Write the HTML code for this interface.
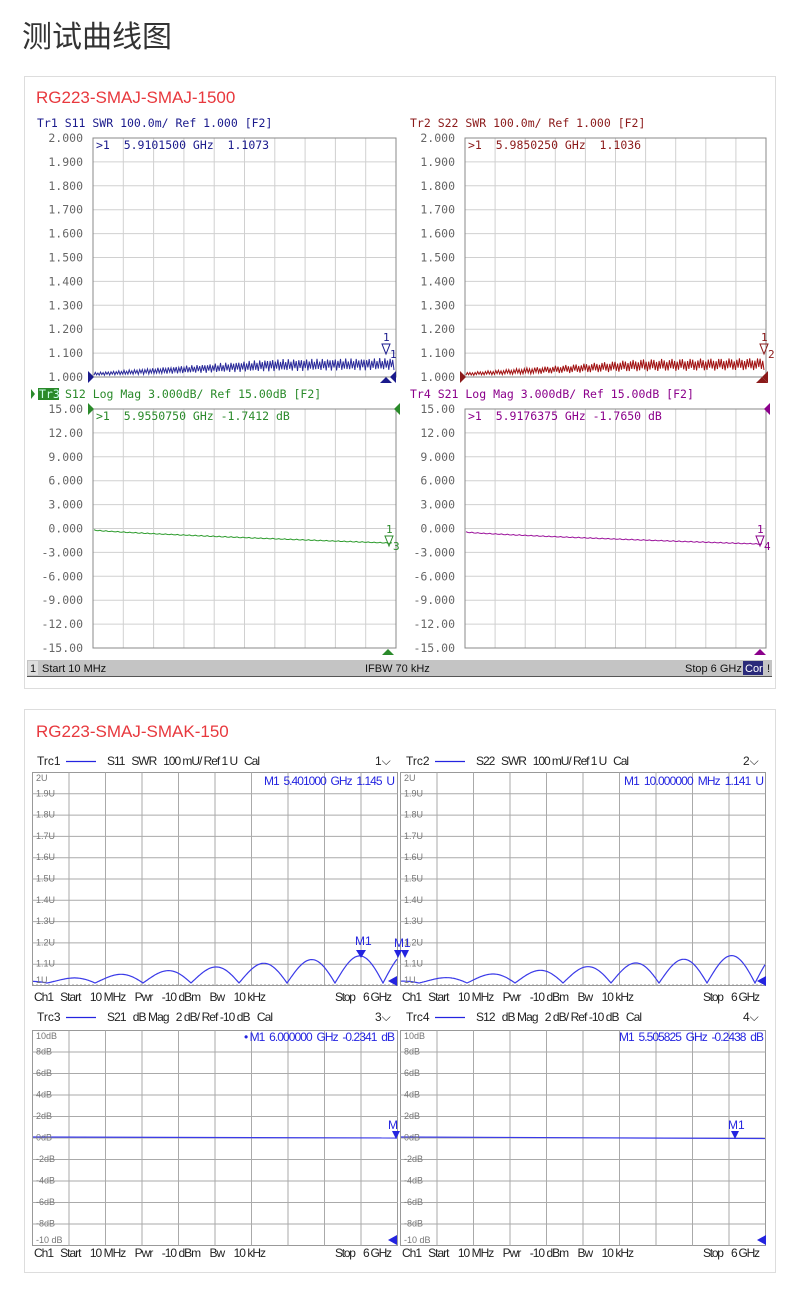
<!DOCTYPE html>
<html><head><meta charset="utf-8"><style>
html,body{margin:0;padding:0;background:#fff;width:800px;height:1290px;overflow:hidden}
svg{display:block}
text{white-space:pre}
.m{font-family:"DejaVu Sans Mono","Liberation Mono",monospace;font-size:11.5px}
.s{font-family:"Liberation Sans","DejaVu Sans",sans-serif;font-size:12px;fill:#222}
.yl{font-family:"DejaVu Sans Mono","Liberation Mono",monospace;font-size:11.5px;fill:#666;text-anchor:end}
.yl2{font-family:"Liberation Sans",sans-serif;font-size:9px;fill:#777}
</style></head><body>
<svg id="S" width="800" height="1290" xmlns="http://www.w3.org/2000/svg" xml:space="preserve">
<text x="22" y="47" font-family="'Liberation Sans','Noto Sans CJK SC',sans-serif" font-size="30" fill="#333">测试曲线图</text>
<rect x="24.5" y="76.5" width="751" height="612" fill="#fff" stroke="#ddd"/>
<rect x="24.5" y="709.5" width="751" height="563" fill="#fff" stroke="#ddd"/>
<text x="36" y="103" font-family="'Liberation Sans',sans-serif" font-size="17" fill="#e8383d">RG223-SMAJ-SMAJ-1500</text>
<text x="36" y="737" font-family="'Liberation Sans',sans-serif" font-size="17" fill="#e8383d">RG223-SMAJ-SMAK-150</text>
<g id="G"></g>
<text class="m" x="37" y="127" fill="#1a1a8c">Tr1 S11 SWR 100.0m/ Ref 1.000 [F2]</text>
<text class="m" x="410" y="127" fill="#8b1a1a">Tr2 S22 SWR 100.0m/ Ref 1.000 [F2]</text>
<rect x="38" y="388" width="21" height="12" fill="#2a8a2a"/>
<text class="m" x="39" y="398" fill="#cfe">Tr3</text>
<polygon points="31,389 35,394 31,399" fill="#2a8a2a"/>
<text class="m" x="65" y="398" fill="#2a8a2a">S12 Log Mag 3.000dB/ Ref 15.00dB [F2]</text>
<text class="m" x="410" y="398" fill="#8b008b">Tr4 S21 Log Mag 3.000dB/ Ref 15.00dB [F2]</text>
<text class="m" x="96" y="149" fill="#1a1a8c">&gt;1  5.9101500 GHz  1.1073</text>
<text class="m" x="468" y="149" fill="#8b1a1a">&gt;1  5.9850250 GHz  1.1036</text>
<text class="m" x="96" y="420" fill="#2a8a2a">&gt;1  5.9550750 GHz -1.7412 dB</text>
<text class="m" x="468" y="420" fill="#8b008b">&gt;1  5.9176375 GHz -1.7650 dB</text>
<g id="YL"></g>
<rect x="27" y="660" width="745" height="16" fill="#c4c4c4"/>
<line x1="27" y1="676.5" x2="772" y2="676.5" stroke="#555"/>
<rect x="28" y="661" width="10" height="14" fill="#ddd"/>
<text x="30" y="672" font-family="'Liberation Sans Narrow','Liberation Sans',sans-serif" font-size="11" fill="#111">1</text>
<text x="42" y="672" font-family="'Liberation Sans Narrow','Liberation Sans',sans-serif" font-size="11" fill="#111">Start 10 MHz</text>
<text x="365" y="672" font-family="'Liberation Sans Narrow','Liberation Sans',sans-serif" font-size="11" fill="#111">IFBW 70 kHz</text>
<text x="685" y="672" font-family="'Liberation Sans Narrow','Liberation Sans',sans-serif" font-size="11" fill="#111">Stop 6 GHz</text>
<rect x="743" y="661" width="20" height="14" fill="#2a2a7a"/>
<text x="745" y="672" font-family="'Liberation Sans Narrow','Liberation Sans',sans-serif" font-size="11" fill="#fff">Cor</text>
<text x="767" y="672" font-family="'Liberation Sans',sans-serif" font-size="11" fill="#111">!</text>
<g class="s">
<text x="37" y="765">Trc1</text><line x1="66" y1="761.5" x2="96" y2="761.5" stroke="#2424e0" stroke-width="1.3"/>
<text x="107" y="765" textLength="153" lengthAdjust="spacing">S11   SWR   100 mU/ Ref 1 U   Cal</text><text x="375" y="765">1⌵</text>
<text x="406" y="765">Trc2</text><line x1="435" y1="761.5" x2="465" y2="761.5" stroke="#2424e0" stroke-width="1.3"/>
<text x="476" y="765" textLength="153" lengthAdjust="spacing">S22   SWR   100 mU/ Ref 1 U   Cal</text><text x="743" y="765">2⌵</text>
<text x="37" y="1021">Trc3</text><line x1="66" y1="1017.5" x2="96" y2="1017.5" stroke="#2424e0" stroke-width="1.3"/>
<text x="107" y="1021" textLength="166" lengthAdjust="spacing">S21   dB Mag   2 dB/ Ref -10 dB   Cal</text><text x="375" y="1021">3⌵</text>
<text x="406" y="1021">Trc4</text><line x1="435" y1="1017.5" x2="465" y2="1017.5" stroke="#2424e0" stroke-width="1.3"/>
<text x="476" y="1021" textLength="166" lengthAdjust="spacing">S12   dB Mag   2 dB/ Ref -10 dB   Cal</text><text x="743" y="1021">4⌵</text>
<text x="34" y="1001" textLength="232" lengthAdjust="spacing">Ch1   Start    10 MHz    Pwr    -10 dBm    Bw    10 kHz</text><text x="335" y="1001" textLength="57" lengthAdjust="spacing">Stop    6 GHz</text>
<text x="402" y="1001" textLength="232" lengthAdjust="spacing">Ch1   Start    10 MHz    Pwr    -10 dBm    Bw    10 kHz</text><text x="703" y="1001" textLength="57" lengthAdjust="spacing">Stop    6 GHz</text>
<text x="34" y="1257" textLength="232" lengthAdjust="spacing">Ch1   Start    10 MHz    Pwr    -10 dBm    Bw    10 kHz</text><text x="335" y="1257" textLength="57" lengthAdjust="spacing">Stop    6 GHz</text>
<text x="402" y="1257" textLength="232" lengthAdjust="spacing">Ch1   Start    10 MHz    Pwr    -10 dBm    Bw    10 kHz</text><text x="703" y="1257" textLength="57" lengthAdjust="spacing">Stop    6 GHz</text>
</g>
<g font-family="'Liberation Sans',sans-serif" font-size="12" fill="#2424e0">
<text x="264" y="785" textLength="131" lengthAdjust="spacing">M1  5.401000  GHz  1.145  U</text>
<text x="624" y="785" textLength="140" lengthAdjust="spacing">M1  10.000000  MHz  1.141  U</text>
<text x="244" y="1041" textLength="151" lengthAdjust="spacing">• M1  6.000000  GHz  -0.2341  dB</text>
<text x="619" y="1041" textLength="145" lengthAdjust="spacing">M1  5.505825  GHz  -0.2438  dB</text>
<text x="355" y="945">M1</text><text x="394" y="947">M1</text>
<text x="388" y="1129">M</text><text x="728" y="1129">M1</text>
</g>
<g id="Y2"></g>
</svg>
<script>
var NS="http://www.w3.org/2000/svg",G=document.getElementById('G');
function el(t,a,p){var e=document.createElementNS(NS,t);for(var k in a)e.setAttribute(k,a[k]);(p||G).appendChild(e);return e;}
function grid1(x0,y0,w,h,col){for(var i=1;i<10;i++){el('line',{x1:x0+w*i/10,y1:y0,x2:x0+w*i/10,y2:y0+h,stroke:'#d0d0d0'});el('line',{x1:x0,y1:y0+h*i/10,x2:x0+w,y2:y0+h*i/10,stroke:'#d0d0d0'});}
el('rect',{x:x0,y:y0,width:w,height:h,fill:'none',stroke:'#888'});}
grid1(93,138,303,239);grid1(465,138,301,239);grid1(93,409,303,239);grid1(465,409,301,239);
var YL=document.getElementById('YL');
var a=['2.000','1.900','1.800','1.700','1.600','1.500','1.400','1.300','1.200','1.100','1.000'],b=['15.00','12.00','9.000','6.000','3.000','0.000','-3.000','-6.000','-9.000','-12.00','-15.00'];
for(var i=0;i<11;i++){[[83,138,a,'#1a1a8c'],[455,138,a,'#8b1a1a'],[83,409,b,'#2a8a2a'],[455,409,b,'#666']].forEach(function(q){var t=el('text',{x:q[0],y:q[1]+i*23.9+4,'class':'yl',fill:(i==10&&q[1]==138)||(i==0&&q[0]==83&&q[1]==409)?q[3]:'#666'},YL);t.textContent=q[2][i];});}
function swr(x0,w,col,seed){var d='',n=230;for(var i=0;i<=n;i++){var f=i/n;var g=Math.min(1,f*1.7);var base=374-g*7-f*3;var amp=3+g*9;var y=base+(i%2?-amp/2:amp/2)*(0.75+0.25*Math.sin(i*seed));d+=(i?'L':'M')+(x0+f*w).toFixed(1)+' '+y.toFixed(1);}el('path',{d:d,fill:'none',stroke:col,'stroke-width':1});}
swr(94,300,'#2a2a9a',1.7);swr(466,298,'#a01010',2.3);
function flat(x0,w,y1,y2,col){var d='';for(var i=0;i<=150;i++){var f=i/150;d+=(i?'L':'M')+(x0+f*w).toFixed(1)+' '+(y1+(y2-y1)*Math.pow(f,0.8)+(i%3?0.3:-0.3)).toFixed(1);}el('path',{d:d,fill:'none',stroke:col,'stroke-width':1});}
flat(94,298,530,543,'#2a9a2a');flat(466,296,532,544,'#9a109a');
function tri(p,c){el('polygon',{points:p,fill:c});}
tri('88,371 94,377 88,383','#1a1a8c');tri('396,371 390,377 396,383','#1a1a8c');tri('380,383 386,377 392,383','#1a1a8c');
tri('460,371 466,377 460,383','#8b1a1a');tri('768,371 762,377 768,383','#8b1a1a');tri('756,383 762,377 768,383','#8b1a1a');
tri('88,403 94,409 88,415','#2a8a2a');tri('400,403 394,409 400,415','#2a8a2a');tri('382,655 388,649 394,655','#2a8a2a');
tri('770,403 764,409 770,415','#8b008b');tri('754,655 760,649 766,655','#8b008b');
[[386,'#1a1a8c',348,'1'],[764,'#8b1a1a',348,'2'],[389,'#2a8a2a',540,'3'],[760,'#8b008b',540,'4']].forEach(function(q){el('polygon',{points:(q[0]-4)+','+(q[2]-4)+' '+(q[0]+4)+','+(q[2]-4)+' '+q[0]+','+(q[2]+6),fill:'none',stroke:q[1]});var t=el('text',{x:q[0]-3,y:q[2]-7,fill:q[1],'font-family':'DejaVu Sans Mono','font-size':'11'});t.textContent='1';var u=el('text',{x:q[0]+4,y:q[2]+10,fill:q[1],'font-family':'DejaVu Sans Mono','font-size':'11'});u.textContent=q[3];});
function grid2(x0,y0,w,h){el('rect',{x:x0,y:y0,width:w,height:h,fill:'#fff',stroke:'#999'});for(var i=1;i<10;i++){el('line',{x1:x0+w*i/10,y1:y0,x2:x0+w*i/10,y2:y0+h,stroke:'#aaa'});el('line',{x1:x0,y1:y0+h*i/10,x2:x0+w,y2:y0+h*i/10,stroke:'#aaa'});}}
grid2(32.5,772.5,365,213);grid2(400.5,772.5,365,213);grid2(32.5,1030.5,365,215);grid2(400.5,1030.5,365,215);
el('line',{x1:32,y1:985,x2:398,y2:985,stroke:'#999','stroke-dasharray':'2,2'});el('line',{x1:400,y1:985,x2:766,y2:985,stroke:'#999','stroke-dasharray':'2,2'});
var Y2=document.getElementById('Y2');
var l1=['2U','1.9U','1.8U','1.7U','1.6U','1.5U','1.4U','1.3U','1.2U','1.1U','1U'],l2=['10dB','8dB','6dB','4dB','2dB','0dB','-2dB','-4dB','-6dB','-8dB','-10 dB'];
for(var i=0;i<11;i++){[[36,772,21.3,l1],[404,772,21.3,l1],[36,1030,21.5,l2],[404,1030,21.5,l2]].forEach(function(q){var y=q[1]+i*q[2];var t=el('text',{x:q[0],y:(i==0?y+9:i==10?y-2:y+3),'class':'yl2',fill:i==10?'#222':'#777'},Y2);t.textContent=q[3][i];});}
function rip(x0,x1,vref,amp0,amp1){var d='';for(var x=x0;x<=x1;x+=1){var f=(x-x0)/(x1-x0);var a=amp0+(amp1-amp0)*f;var y=985-2-a*Math.abs(Math.sin(Math.PI*(x-vref)/48));d+=(x==x0?'M':'L')+x+' '+y.toFixed(1);}el('path',{d:d,fill:'none',stroke:'#3a3ae8','stroke-width':1.2});}
rip(33,397,383,2,30);rip(401,765,755,2,30);
tri('356,950 366,950 361,958','#2424e0');tri('394,950 402,950 398,958','#2424e0');tri('397,976 388,981 397,986','#2424e0');tri('401,950 409,950 405,958','#2424e0');tri('766,976 757,981 766,986','#2424e0');
el('line',{x1:33,y1:1137,x2:397,y2:1138,stroke:'#3a3ae8','stroke-width':1.2});el('line',{x1:401,y1:1137,x2:765,y2:1138.5,stroke:'#3a3ae8','stroke-width':1.2});
tri('392,1131 400,1131 396,1139','#2424e0');tri('731,1131 739,1131 735,1139','#2424e0');tri('397,1235 388,1240 397,1245','#2424e0');tri('766,1235 757,1240 766,1245','#2424e0');
</script>
</body></html>
